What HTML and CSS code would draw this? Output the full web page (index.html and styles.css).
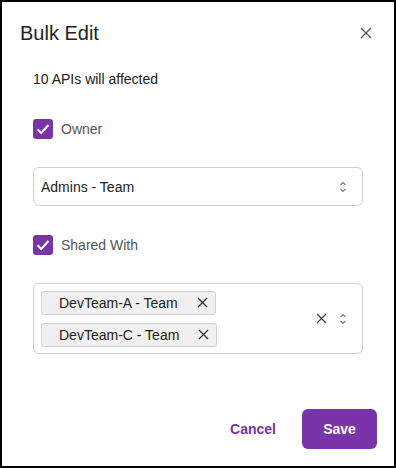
FILE: index.html
```html
<!DOCTYPE html>
<html lang="en">
<head>
    <meta charset="UTF-8">
    <meta name="viewport" content="width=device-width, initial-scale=1.0">
    <title>Bulk Edit</title>
    <link rel="stylesheet" href="styles.css">
</head>
<body>
    <div class="dialog">
        <header class="dialog-header">
            <h1>Bulk Edit</h1>
            <button class="icon-button close-button" aria-label="Close">
                <svg width="12" height="12" viewBox="0 0 12 12"><path d="M1 1L11 11M11 1L1 11" stroke="#555" stroke-width="1.3"/></svg>
            </button>
        </header>

        <div class="dialog-body">
            <p class="summary">10 APIs will affected</p>

            <label class="check-row">
                <span class="checkbox">
                    <svg width="20" height="20" viewBox="0 0 20 20"><path d="M4.5 10.2L8.2 14L15.5 6" fill="none" stroke="#fff" stroke-width="2"/></svg>
                </span>
                Owner
            </label>

            <div class="select">
                <span class="select-value">Admins - Team</span>
                <span class="select-icons">
                    <svg class="chevrons" width="8" height="14" viewBox="0 0 8 14"><path d="M1.5 5L4 2.5L6.5 5M1.5 9L4 11.5L6.5 9" fill="none" stroke="#777" stroke-width="1.1"/></svg>
                </span>
            </div>

            <label class="check-row shared">
                <span class="checkbox">
                    <svg width="20" height="20" viewBox="0 0 20 20"><path d="M4.5 10.2L8.2 14L15.5 6" fill="none" stroke="#fff" stroke-width="2"/></svg>
                </span>
                Shared With
            </label>

            <div class="select multi">
                <div class="chips">
                    <span class="chip">DevTeam-A - Team
                        <svg width="11" height="11" viewBox="0 0 11 11"><path d="M1 1L10 10M10 1L1 10" stroke="#333" stroke-width="1.3"/></svg>
                    </span>
                    <span class="chip">DevTeam-C - Team
                        <svg width="11" height="11" viewBox="0 0 11 11"><path d="M1 1L10 10M10 1L1 10" stroke="#333" stroke-width="1.3"/></svg>
                    </span>
                </div>
                <span class="select-icons">
                    <svg width="11" height="11" viewBox="0 0 11 11"><path d="M1 1L10 10M10 1L1 10" stroke="#444" stroke-width="1.3"/></svg>
                    <svg class="chevrons" width="8" height="14" viewBox="0 0 8 14"><path d="M1.5 5L4 2.5L6.5 5M1.5 9L4 11.5L6.5 9" fill="none" stroke="#777" stroke-width="1.1"/></svg>
                </span>
            </div>
        </div>

        <footer class="dialog-footer">
            <button class="btn btn-text">Cancel</button>
            <button class="btn btn-primary">Save</button>
        </footer>
    </div>
</body>
</html>
```

FILE: styles.css
```css
* {
    box-sizing: border-box;
}

body {
    margin: 0;
    font-family: "Liberation Sans", Arial, sans-serif;
    background: #fff;
}

.dialog {
    width: 396px;
    height: 468px;
    border: 2px solid #000;
    background: #fff;
    display: flex;
    flex-direction: column;
}

.dialog-header {
    display: flex;
    align-items: center;
    justify-content: space-between;
    padding: 19px 22px 0 18px;
}

.dialog-header h1 {
    margin: 0;
    font-size: 20px;
    font-weight: normal;
    color: #222;
    line-height: 24px;
}

.icon-button {
    background: none;
    border: none;
    padding: 0;
    cursor: pointer;
    display: flex;
}

.dialog-body {
    padding: 0 31px;
    flex: 1;
}

.summary {
    margin: 26px 0 0;
    font-size: 14px;
    color: #222;
    line-height: 16px;
}

.check-row {
    display: flex;
    align-items: center;
    gap: 8px;
    margin-top: 32px;
    font-size: 14px;
    color: #555;
    line-height: 20px;
}

.check-row.shared {
    margin-top: 29px;
}

.checkbox {
    width: 20px;
    height: 20px;
    border-radius: 3px;
    background: #7834a8;
    display: flex;
}

.select {
    margin-top: 28px;
    height: 39px;
    border: 1px solid #d0d0d0;
    border-radius: 6px;
    display: flex;
    align-items: center;
    justify-content: space-between;
    padding: 0 15px 0 7px;
}

.select-value {
    font-size: 14px;
    color: #222;
}

.select-icons {
    display: flex;
    align-items: center;
    gap: 12px;
}

.select.multi {
    height: 71px;
}

.chips {
    display: flex;
    flex-direction: column;
    align-items: flex-start;
    gap: 8px;
}

.chip {
    display: flex;
    align-items: center;
    gap: 19px;
    height: 24px;
    padding: 0 7px 0 17px;
    background: #f0f0f0;
    border: 1px solid #d0d0d0;
    border-radius: 3px;
    font-size: 14px;
    color: #222;
}

.dialog-footer {
    display: flex;
    justify-content: flex-end;
    align-items: center;
    gap: 26px;
    padding: 0 17px 17px 0;
}

.btn {
    font-family: inherit;
    font-size: 14px;
    font-weight: bold;
    border: none;
    cursor: pointer;
}

.btn-text {
    background: none;
    color: #7834a8;
    padding: 0;
}

.btn-primary {
    width: 75px;
    height: 40px;
    border-radius: 6px;
    background: #7834a8;
    color: #fff;
}
```
